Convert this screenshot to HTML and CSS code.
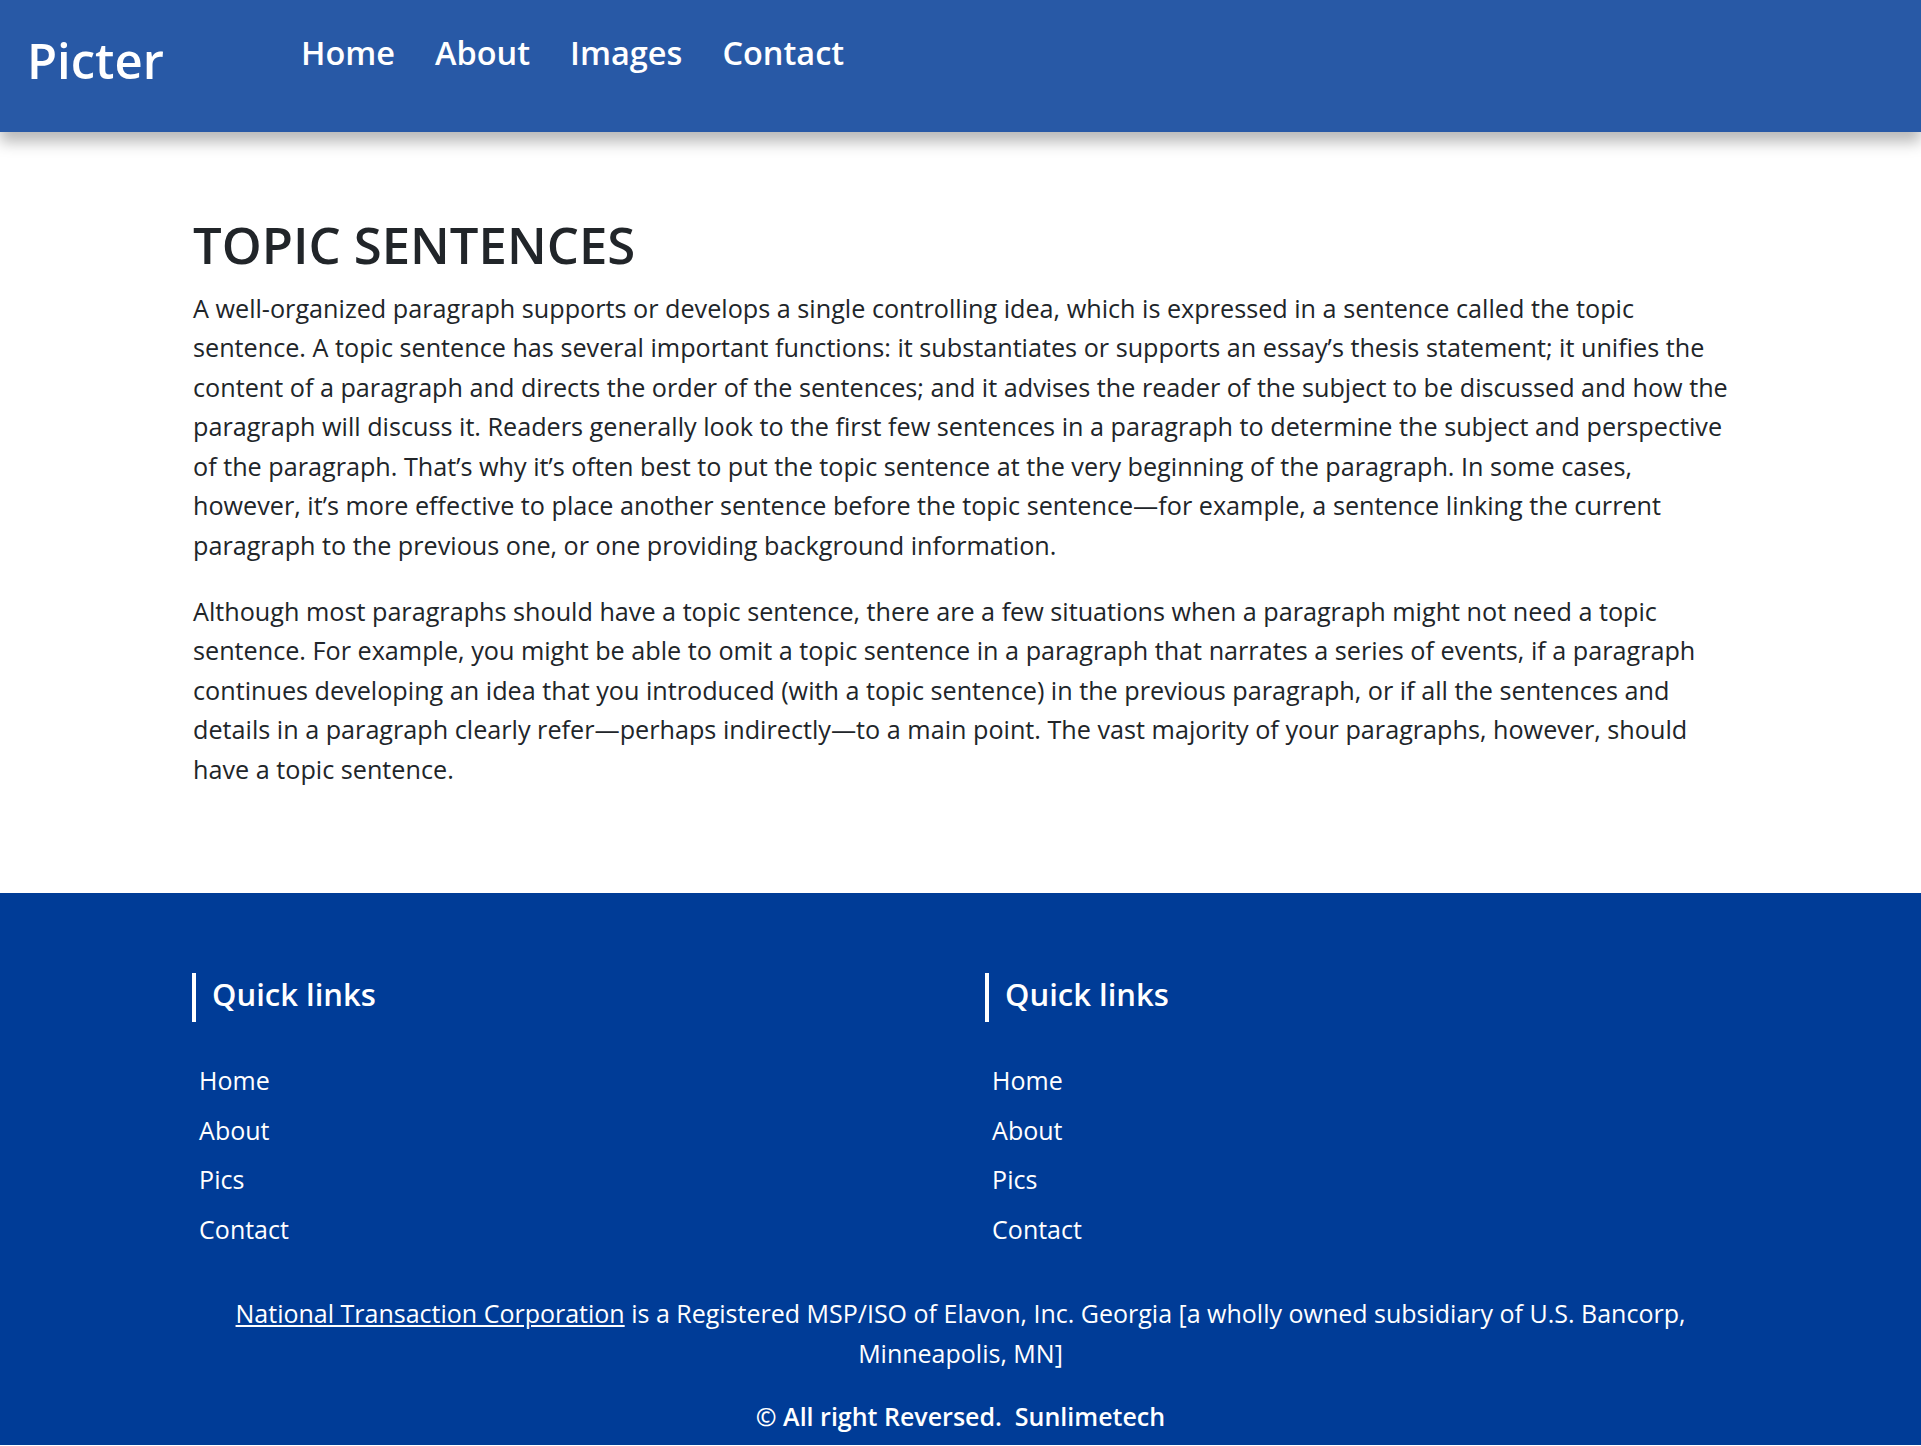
FILE: index.html
```html
<!DOCTYPE html>
<html lang="en">
<head>
<meta charset="utf-8">
<title>Picter</title>
<link rel="stylesheet" href="styles.css">
</head>
<body>
<header class="site-header">
  <a class="brand" href="#">Picter</a>
  <nav class="main-nav">
    <a href="#">Home</a>
    <a href="#">About</a>
    <a href="#">Images</a>
    <a href="#">Contact</a>
  </nav>
</header>

<main class="content">
  <h1 class="title">TOPIC SENTENCES</h1>
  <p class="text">A well-organized paragraph supports or develops a single controlling idea, which is expressed in a sentence called the topic sentence. A topic sentence has several important functions: it substantiates or supports an essay’s thesis statement; it unifies the content of a paragraph and directs the order of the sentences; and it advises the reader of the subject to be discussed and how the paragraph will discuss it. Readers generally look to the first few sentences in a paragraph to determine the subject and perspective of the paragraph. That’s why it’s often best to put the topic sentence at the very beginning of the paragraph. In some cases, however, it’s more effective to place another sentence before the topic sentence—for example, a sentence linking the current paragraph to the previous one, or one providing background information.</p>
  <p class="text">Although most paragraphs should have a topic sentence, there are a few situations when a paragraph might not need a topic sentence. For example, you might be able to omit a topic sentence in a paragraph that narrates a series of events, if a paragraph continues developing an idea that you introduced (with a topic sentence) in the previous paragraph, or if all the sentences and details in a paragraph clearly refer—perhaps indirectly—to a main point. The vast majority of your paragraphs, however, should have a topic sentence.</p>
</main>

<footer class="site-footer">
  <div class="footer-cols">
    <div class="footer-col">
      <h2 class="footer-title">Quick links</h2>
      <ul class="footer-links">
        <li><a href="#">Home</a></li>
        <li><a href="#">About</a></li>
        <li><a href="#">Pics</a></li>
        <li><a href="#">Contact</a></li>
      </ul>
    </div>
    <div class="footer-col">
      <h2 class="footer-title">Quick links</h2>
      <ul class="footer-links">
        <li><a href="#">Home</a></li>
        <li><a href="#">About</a></li>
        <li><a href="#">Pics</a></li>
        <li><a href="#">Contact</a></li>
      </ul>
    </div>
  </div>
  <p class="footer-note"><a href="#">National Transaction Corporation</a> is a Registered MSP/ISO of Elavon, Inc. Georgia [a wholly owned subsidiary of U.S. Bancorp, Minneapolis, MN]</p>
  <p class="copyright">© All right Reversed.&nbsp; Sunlimetech</p>
</footer>
</body>
</html>
```

FILE: styles.css
```css
* {
  box-sizing: border-box;
}

html, body {
  margin: 0;
  padding: 0;
}

body {
  font-family: "Open Sans", "Noto Sans", "Liberation Sans", sans-serif;
  color: #212529;
  background: #ffffff;
}

a {
  color: inherit;
  text-decoration: none;
}

/* Header */
.site-header {
  position: relative;
  z-index: 2;
  display: flex;
  align-items: flex-start;
  height: 132px;
  padding-left: 27px;
  background: #2859a6;
  box-shadow: 0 10px 14px rgba(0, 0, 0, 0.28);
}

.brand {
  flex: 0 0 274px;
  margin-top: 36px;
  font-size: 49px;
  line-height: 1;
  font-weight: 600;
  color: #ffffff;
}

.main-nav {
  display: flex;
  gap: 40px;
  margin-top: 37px;
}

.main-nav a {
  font-size: 32.5px;
  line-height: 1;
  font-weight: 600;
  color: #ffffff;
}

/* Main */
.content {
  padding: 83px 180px 104px 193px;
}

.title {
  margin: 0 0 13px;
  font-size: 50.8px;
  line-height: 1.2;
  font-weight: 600;
  color: #212529;
}

.text {
  margin: 0 0 26.5px;
  font-size: 25.2px;
  line-height: 39.5px;
}

.text:last-child {
  margin-bottom: 0;
}

/* Footer */
.site-footer {
  background: #003c97;
  color: #ffffff;
  padding: 80px 0 9px;
}

.footer-cols {
  display: grid;
  grid-template-columns: 793px 1fr;
  width: 80%;
  margin: 0 auto;
}

.footer-title {
  margin: 0;
  padding: 1px 0 8px 16px;
  border-left: 4px solid #ffffff;
  font-size: 31px;
  line-height: 40px;
  font-weight: 600;
}

.footer-links {
  list-style: none;
  margin: 34px 0 0;
  padding: 0 0 0 7px;
}

.footer-links li {
  font-size: 25px;
  line-height: 49.4px;
}

.footer-note {
  width: 80%;
  margin: 39px auto 0;
  text-align: center;
  font-size: 25px;
  line-height: 40px;
}

.footer-note a {
  text-decoration: underline;
}

.copyright {
  margin: 23px 0 0;
  text-align: center;
  font-size: 25px;
  line-height: 40px;
  font-weight: 600;
}
```
